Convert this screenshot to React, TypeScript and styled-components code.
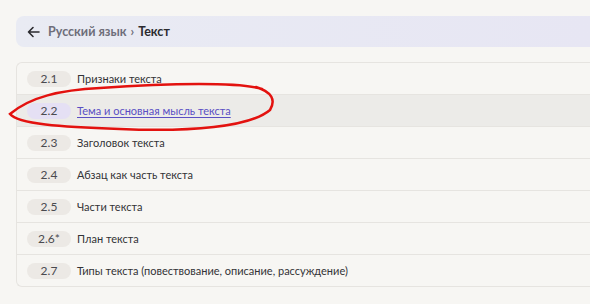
import React from "react";
import styled, { createGlobalStyle } from "styled-components";

const Global = createGlobalStyle`
  html, body { margin: 0; padding: 0; background: #f7f6f3; }
  body { font-family: Lato, "Noto Sans", sans-serif; }
`;

const Page = styled.div`
  position: relative;
  padding: 16px 0 0 16px;
  height: 304px;
  box-sizing: border-box;
  overflow: hidden;
`;

const Header = styled.div`
  display: flex;
  align-items: center;
  gap: 8px;
  height: 31px;
  padding-left: 11px;
  border-radius: 8px 0 0 8px;
  background: linear-gradient(90deg, #e9ebf3 0%, #e7e6f3 100%);
  font-size: 12.5px;
  font-weight: 700;
`;

const Crumb = styled.span<{ $current?: boolean }>`
  color: ${(p) => (p.$current ? "#2b2b2f" : "#6e6e7a")};
`;

const Sep = styled.span`
  color: #6e6e7a;
  margin: 0 4px;
`;

const List = styled.div`
  margin-top: 15px;
  border: 1px solid #e6e4e0;
  border-right: none;
  border-radius: 6px 0 0 6px;
  display: flex;
  flex-direction: column;
`;

const Row = styled.div<{ $active?: boolean }>`
  display: flex;
  align-items: center;
  gap: 6px;
  height: 31px;
  padding-left: 10px;
  background: ${(p) => (p.$active ? "#ecebe8" : "transparent")};
  & + & { border-top: 1px solid #e6e4e0; }
`;

const Badge = styled.span<{ $active?: boolean }>`
  width: 44px;
  height: 16px;
  border-radius: 8px;
  background: ${(p) => (p.$active ? "#e5e0f4" : "#ece9e5")};
  color: #4a4a4f;
  font-size: 12px;
  line-height: 16px;
  text-align: center;
`;

const Title = styled.span<{ $active?: boolean }>`
  font-size: 11px;
  color: ${(p) => (p.$active ? "#5a4fc4" : "#333336")};
  text-decoration: ${(p) => (p.$active ? "underline" : "none")};
  text-underline-offset: 2px;
`;

const Annotation = styled.svg`
  position: absolute;
  left: 0;
  top: 0;
  pointer-events: none;
`;

const items = [
  ["2.1", "Признаки текста"],
  ["2.2", "Тема и основная мысль текста"],
  ["2.3", "Заголовок текста"],
  ["2.4", "Абзац как часть текста"],
  ["2.5", "Части текста"],
  ["2.6*", "План текста"],
  ["2.7", "Типы текста (повествование, описание, рассуждение)"],
];

export default function App() {
  return (
    <>
      <Global />
      <Page>
        <Header>
          <svg width="13" height="12" viewBox="0 0 13 12" fill="none" stroke="#2b2b2f" strokeWidth="1.6" strokeLinecap="round" strokeLinejoin="round">
            <path d="M12 6H1.5M6 1.5L1.5 6L6 10.5" />
          </svg>
          <span>
            <Crumb>Русский язык</Crumb>
            <Sep>›</Sep>
            <Crumb $current>Текст</Crumb>
          </span>
        </Header>
        <List>
          {items.map(([n, t], i) => (
            <Row key={n} $active={i === 1}>
              <Badge $active={i === 1}>{n}</Badge>
              <Title $active={i === 1}>{t}</Title>
            </Row>
          ))}
        </List>
        <Annotation width="590" height="304" viewBox="0 0 590 304">
          <path
            d="M262 89 C 240 82, 170 83, 100 88 C 60 90, 30 97, 10 114 C 18 124, 60 127, 120 129 C 190 132, 250 127, 270 110 C 276 100, 272 92, 256 87"
            fill="none"
            stroke="#e3120f"
            strokeWidth="2.5"
            strokeLinecap="round"
          />
        </Annotation>
      </Page>
    </>
  );
}
